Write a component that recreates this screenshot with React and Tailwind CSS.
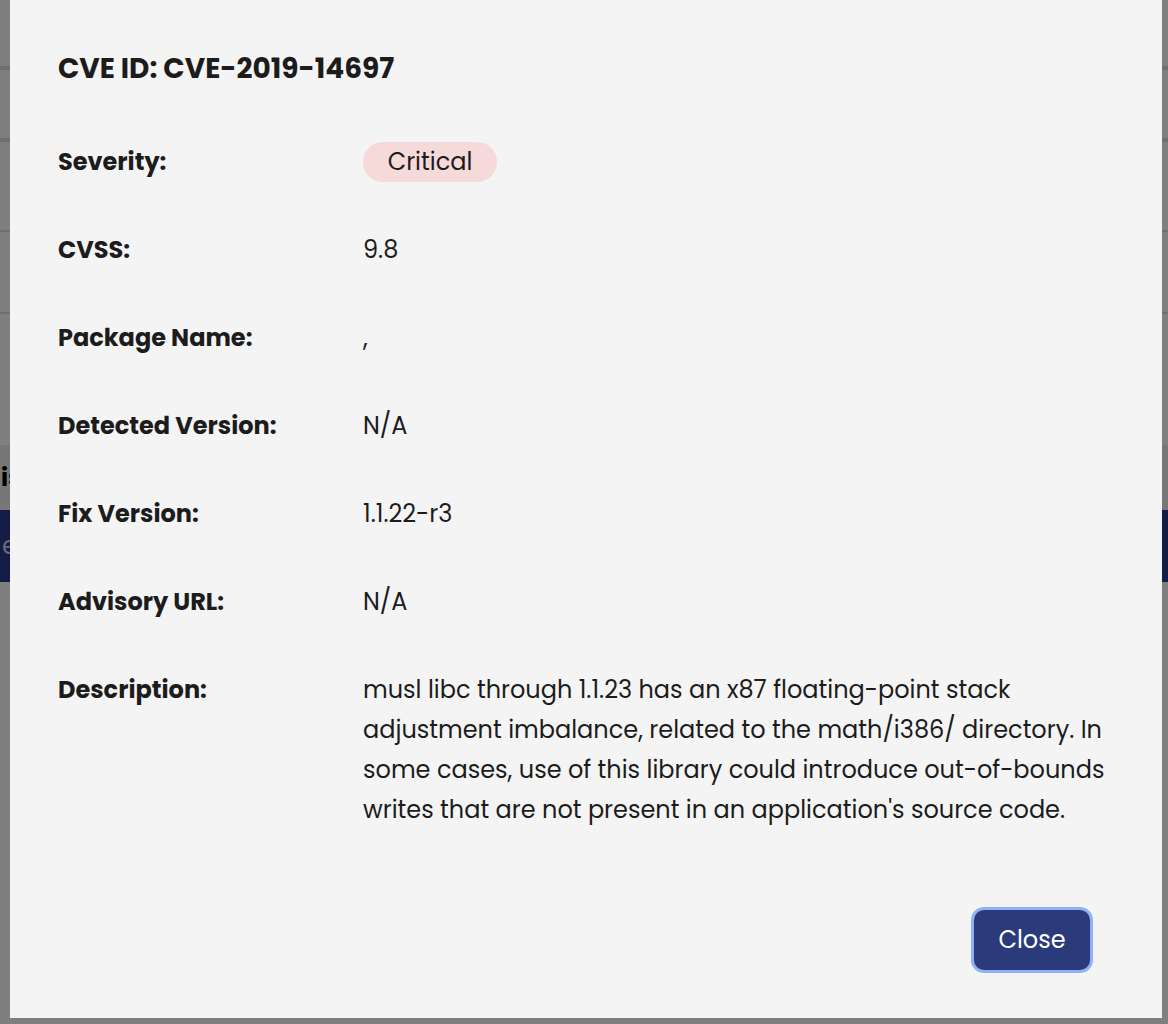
const rows = [
  { label: "Severity:", value: "badge" },
  { label: "CVSS:", value: "9.8" },
  { label: "Package Name:", value: "," },
  { label: "Detected Version:", value: "N/A" },
  { label: "Fix Version:", value: "1.1.22-r3" },
  { label: "Advisory URL:", value: "N/A" },
];

const description =
  "musl libc through 1.1.23 has an x87 floating-point stack adjustment imbalance, related to the math/i386/ directory. In some cases, use of this library could introduce out-of-bounds writes that are not present in an application's source code.";

function Backdrop() {
  return (
    <div className="flex h-[1024px] w-full flex-col bg-white">
      <div className="h-[70px] border-b-4 border-[#dedede]" />
      <div className="h-[72px] border-b-4 border-[#dedede]" />
      <div className="h-[90px] border-b-2 border-[#dedede]" />
      <div className="h-[82px] border-b-2 border-[#dedede]" />
      <div className="h-[131px]" />
      <div className="flex h-[65px] items-center bg-[#eeeeee] pl-[1px] text-[24px] font-bold text-black">
        <span>is</span>
      </div>
      <div className="flex h-[72px] items-center bg-[#28388a] pl-[2px] text-[24px] text-[#cfd3e6]">
        <span>e</span>
      </div>
      <div className="flex-1" />
    </div>
  );
}

export default function App() {
  return (
    <div className="relative h-[1024px] w-full overflow-hidden font-['Poppins','Open_Sans',sans-serif]">
      <Backdrop />
      <div className="absolute inset-0 bg-black/50" />
      <div className="absolute top-0 right-[6px] bottom-[6px] left-[10px] bg-[#f4f4f4] px-[48px] pt-[51px] text-[#1c1c1c]">
        <h2 className="text-[28px] leading-[36px] font-bold">CVE ID: CVE-2019-14697</h2>

        <div className="mt-[55px] flex flex-col gap-[48px]">
          {rows.map((r) => (
            <div key={r.label} className="flex items-center">
              <div className="w-[305px] shrink-0 text-[24px] leading-[40px] font-bold">{r.label}</div>
              {r.value === "badge" ? (
                <span className="inline-flex h-[40px] w-[134px] items-center justify-center rounded-full bg-[#f6d9d9] text-[24px]">
                  Critical
                </span>
              ) : (
                <div className="text-[24px] leading-[40px]">{r.value}</div>
              )}
            </div>
          ))}
          <div className="flex items-start">
            <div className="w-[305px] shrink-0 text-[24px] leading-[40px] font-bold">Description:</div>
            <p className="text-[24px] leading-[40px]">{description}</p>
          </div>
        </div>

        <div className="mt-[80px] flex justify-end pr-[24px]">
          <button className="h-[60px] w-[116px] rounded-[10px] bg-[#2b3a7b] text-[24px] text-white shadow-[0_0_0_3px_#8fb1f7]">
            Close
          </button>
        </div>
      </div>
    </div>
  );
}
